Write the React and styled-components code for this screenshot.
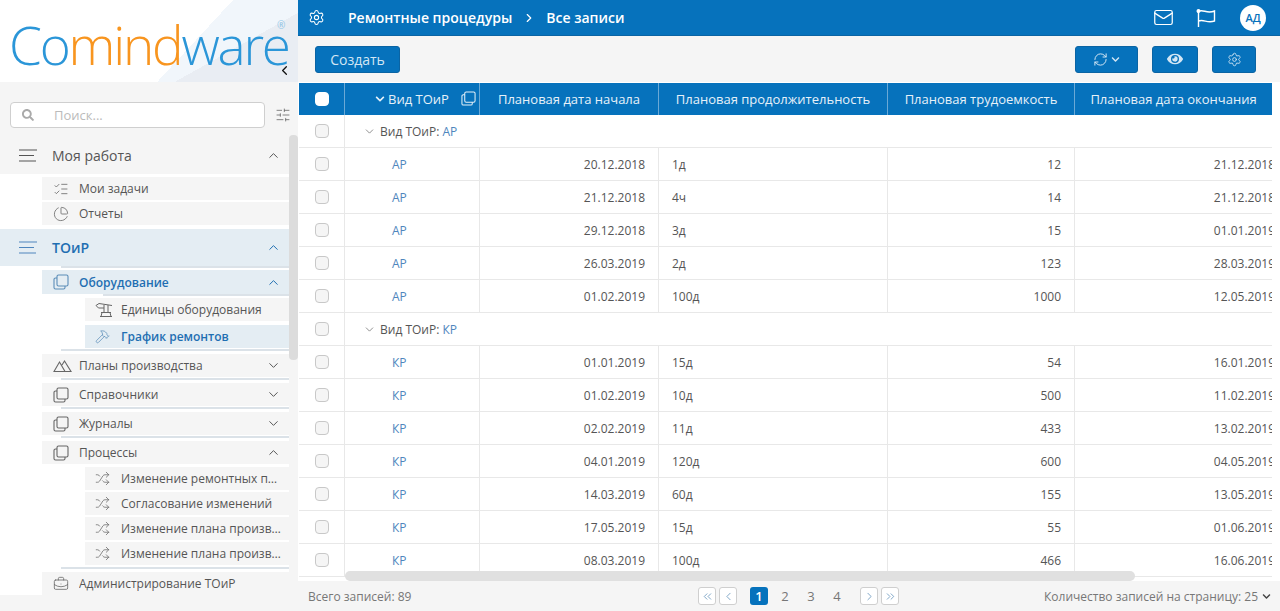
import React from 'react';
import styled, {createGlobalStyle} from 'styled-components';
import {
    BriefcaseBusiness, ChartPie, ChevronDown, ChevronLeft, ChevronRight, ChevronsLeft, ChevronsRight, ChevronUp,
    Hammer, ListChecks, Mail, RefreshCw, Settings, Shuffle, SlidersHorizontal
} from 'lucide-react';
import {FaChevronDown, FaEye, FaSearch} from 'react-icons/fa';

const BLUE = '#0672bc';
const ACTIVE = '#1f6fb2';
const COLUMNS = '46px 135px 179px 229px 187px 214px';
const HEADER_COLUMNS = '46px 135px 179px 229px 187px 197px';

const GlobalStyle = createGlobalStyle`
  html, body {
    margin: 0;
    height: 100%;
    overflow: hidden;
    background: #fff;
    font-family: "Open Sans", "Liberation Sans", sans-serif;
    font-size: 12px;
    color: #555;
  }
`;

const StackIcon = ({color = 'currentColor', size = 16}) => (
    <svg width={size} height={size} viewBox="0 0 16 16" fill="none" stroke={color} strokeWidth="1.1">
        <rect x="4" y="1" width="11" height="11" rx="1.5"/>
        <path d="M4 4H2.5A1.5 1.5 0 0 0 1 5.500V13.500A1.500 1.500 0 0 0 2.500 15H10.500A1.500 1.500 0 0 0 12 13.500V12"/>
    </svg>
);

const MenuLines = ({color}) => (
    <svg width="19" height="13" viewBox="0 0 19 13" fill="none" stroke={color} strokeWidth="1.2">
        <path d="M0 1H18M0 6.500H15M0 12H17"/>
    </svg>
);

const MountainsIcon = () => (
    <svg width="19" height="14" viewBox="0 0 19 14" fill="none" stroke="currentColor" strokeWidth="1.1">
        <path d="M1 12.500L6.500 3L12 12.500ZM9 6L11.500 2L18 12.500H12"/>
    </svg>
);

const EquipmentIcon = () => (
    <svg width="18" height="16" viewBox="0 0 18 16" fill="none" stroke="currentColor" strokeWidth="1">
        <path d="M1 3.500L4 1.500L17 3.500M1 3.500L3.500 6H9M9 3V10.500M13 3V10.500M6 10.500H16M5 14.500H17M7 10.500L6 14.500M15 10.500L16 14.500"/>
    </svg>
);

const FlagIcon = () => (
    <svg width="20" height="20" viewBox="0 0 20 20" fill="none" stroke="currentColor" strokeWidth="1.400">
        <circle cx="2.500" cy="3" r="1.300" fill="currentColor"/>
        <path d="M2.500 4V19M3.500 3C8 1.500 11 6 18.500 3V13C11 15.500 8 11 2.500 13"/>
    </svg>
);

const Page = styled.div`
  display: flex;
  width: 1280px;
  height: 611px;
  overflow: hidden;
`;

const Sidebar = styled.aside`
  position: relative;
  flex: 0 0 298px;
  background: #f5f5f5;
`;

const LogoBox = styled.div`
  position: relative;
  height: 82px;
  padding: 11px 0 0 9px;
  box-sizing: border-box;
  background:
    linear-gradient(150.7deg, transparent 157px, #e9edf3 157px),
    linear-gradient(132.8deg, #fff 171px, #f1f6fb 171px);
`;

const LogoText = styled.div`
  font-family: "Open Sans", sans-serif;
  font-weight: 300;
  font-size: 53px;
  line-height: 68px;
  letter-spacing: -2.2px;
  color: #2b96d8;
  white-space: nowrap;
`;

const LogoAccent = styled.span`
  color: #f8951f;
`;

const Registered = styled.span`
  position: absolute;
  top: 18px;
  left: 277px;
  font-size: 10px;
  color: #8fc4e6;
`;

const CollapseButton = styled.span`
  position: absolute;
  top: 63px;
  left: 277px;
  display: flex;
  color: #111;
`;

const SearchRow = styled.div`
  display: flex;
  align-items: flex-start;
  height: 55px;
  padding: 20px 0 0 10px;
  box-sizing: border-box;
`;

const SearchBox = styled.div`
  display: flex;
  align-items: center;
  width: 255px;
  height: 26px;
  box-sizing: border-box;
  padding-left: 11px;
  background: #fff;
  border: 1px solid #cfcfcf;
  border-radius: 4px;
  color: #bbb;
  font-size: 13px;
`;

const SearchHint = styled.span`
  margin-left: 20px;
`;

const FilterButton = styled.span`
  display: flex;
  margin: 5px 0 0 10px;
  color: #666;
`;

const Nav = styled.nav`
  width: 289px;
  background: #fff;
`;

const SectionRow = styled.div`
  display: flex;
  align-items: center;
  height: 37px;
  padding: 0 8px 0 19px;
  background: ${p => (p.$active ? '#e4edf3' : '#f5f5f5')};
  color: ${p => (p.$active ? ACTIVE : '#555')};
  font-size: 14px;
  font-weight: ${p => (p.$active ? 600 : 500)};
`;

const SectionTitle = styled.span`
  flex: 1;
  margin-left: 14px;
`;

const Group = styled.div`
  display: flex;
  flex-direction: column;
  padding: ${p => p.$padding};
  padding-left: 42px;
`;

const Item = styled.div`
  display: flex;
  align-items: center;
  flex: none;
  height: ${p => p.$height || 23}px;
  margin-bottom: ${p => p.$gap || 0}px;
  margin-left: ${p => (p.$child ? 43 : 0)}px;
  padding: 0 8px 0 ${p => (p.$child ? 10 : 11)}px;
  background: ${p => (p.$active ? '#e4edf3' : '#f5f5f5')};
  color: ${p => (p.$active ? ACTIVE : '#555')};
  font-weight: ${p => (p.$active ? 600 : 400)};
  white-space: nowrap;
`;

const ItemIcon = styled.span`
  display: flex;
  flex: 0 0 ${p => (p.$child ? 26 : 26)}px;
  color: ${p => (p.$active ? '#5b8db8' : '#666')};
`;

const ItemLabel = styled.span`
  flex: 1;
  overflow: hidden;
  text-overflow: ellipsis;
`;

const Rule = styled.div`
  flex: none;
  height: 2px;
  margin: ${p => p.$margin || '1px 0 3px'};
  margin-left: ${p => p.$inset}px;
  background: #dbe2e8;
`;

const ScrollThumb = styled.div`
  position: absolute;
  top: 135px;
  left: 289px;
  width: 9px;
  height: 225px;
  border-radius: 4px;
  background: #dcdcdc;
`;

const Main = styled.main`
  display: flex;
  flex: 1;
  flex-direction: column;
  min-width: 0;
`;

const TopBar = styled.header`
  display: flex;
  align-items: center;
  flex: none;
  height: 36px;
  box-sizing: border-box;
  padding: 0 14px 0 10px;
  background: ${BLUE};
  border-bottom: 1px solid #0a64a4;
  color: #fff;
`;

const Crumb = styled.span`
  font-size: 14px;
  font-weight: 600;
`;

const CrumbIcon = styled.span`
  display: flex;
  margin-right: 23px;
`;

const CrumbSeparator = styled.span`
  display: flex;
  margin: 0 10px;
`;

const TopActions = styled.div`
  display: flex;
  align-items: center;
  gap: 22px;
  margin-left: auto;
`;

const Avatar = styled.span`
  display: flex;
  align-items: center;
  justify-content: center;
  width: 26px;
  height: 26px;
  margin-left: 2px;
  border-radius: 50%;
  background: #fff;
  color: ${BLUE};
  font-size: 11px;
  font-weight: 600;
`;

const Toolbar = styled.div`
  display: flex;
  align-items: center;
  flex: none;
  height: 46px;
  padding: 0 24px 0 17px;
  background: #f5f5f5;
`;

const ToolButton = styled.button`
  display: flex;
  align-items: center;
  justify-content: center;
  gap: 3px;
  width: ${p => p.$width}px;
  height: 27px;
  margin-left: ${p => p.$gap || 0}px;
  padding: 0;
  background: ${BLUE};
  border: 1px solid #0a64a4;
  border-radius: 3px;
  color: #d3e6f4;
  font: 400 14px "Open Sans", sans-serif;
`;

const Spacer = styled.div`
  flex: 1;
`;

const TableFrame = styled.div`
  position: relative;
  flex: 1;
  min-height: 0;
  overflow: hidden;
  margin: 1px 8px 0 1px;
`;

const HeaderRow = styled.div`
  display: grid;
  grid-template-columns: ${HEADER_COLUMNS};
  height: 32px;
  background: ${BLUE};
  color: #e6f1f9;
  font-size: 13px;
`;

const HeaderCell = styled.div`
  display: flex;
  align-items: center;
  justify-content: center;
  gap: 3px;
  position: relative;
  border-right: 1px solid #6aa9d6;
  white-space: nowrap;

  &:last-child {
    border-right: 0;
  }
`;

const HeaderCopy = styled.span`
  position: absolute;
  top: 8px;
  right: 3px;
  display: flex;
`;

const Row = styled.div`
  display: grid;
  grid-template-columns: ${COLUMNS};
  width: 990px;
  height: 33px;
  box-sizing: border-box;
  border-bottom: 1px solid #e8e8e8;
`;

const GroupRow = styled(Row)`
  grid-template-columns: 46px 1fr;
  border-bottom-width: 1px;
`;

const Cell = styled.div`
  display: flex;
  align-items: center;
  justify-content: ${p => p.$align || 'flex-start'};
  padding: 0 13px;
  border-right: 1px solid #e8e8e8;
  white-space: nowrap;
  min-width: 0;
`;

const GroupCell = styled(Cell)`
  gap: 4px;
  padding-left: 18px;
  border-right: 0;
`;

const CheckCell = styled(Cell)`
  justify-content: center;
  padding: 0;
`;

const Check = styled.span`
  width: 14px;
  height: 14px;
  box-sizing: border-box;
  border: 1px solid ${p => (p.$light ? '#fff' : '#c8c8c8')};
  border-radius: 4px;
  background: ${p => (p.$light ? '#fff' : '#f5f5f5')};
`;

const Link = styled.span`
  color: #4f86bd;
`;

const LinkCell = styled(Cell)`
  padding-left: 47px;
`;

const HScroll = styled.div`
  position: absolute;
  left: 46px;
  bottom: 0;
  width: 790px;
  height: 10px;
  border-radius: 5px;
  background: #e0e0e0;
`;

const Footer = styled.footer`
  display: grid;
  grid-template-columns: 390px 202px 1fr;
  align-items: center;
  flex: none;
  height: 30px;
  padding-left: 10px;
  background: #f5f5f5;
  color: #777;
`;

const Pager = styled.div`
  display: flex;
  align-items: center;
`;

const PageArrow = styled.span`
  display: flex;
  align-items: center;
  justify-content: center;
  width: 18px;
  height: 18px;
  margin-right: ${p => p.$gap ?? 3}px;
  background: #fff;
  border: 1px solid #cfcfcf;
  border-radius: 3px;
  box-sizing: border-box;
  color: #5b8db8;
`;

const PageNumber = styled.span`
  display: flex;
  align-items: center;
  justify-content: center;
  width: 18px;
  height: 18px;
  margin-right: ${p => p.$gap ?? 8}px;
  border-radius: 3px;
  background: ${p => (p.$current ? BLUE : 'transparent')};
  color: ${p => (p.$current ? '#fff' : '#777')};
  font-size: 13px;
  font-weight: ${p => (p.$current ? 600 : 400)};
`;

const PageSize = styled.div`
  display: flex;
  align-items: center;
  justify-content: flex-end;
  gap: 4px;
  padding-right: 9px;
  color: #777;
`;

const groups = [
    {
        name: 'АР',
        rows: [
            ['20.12.2018', '1д', '12', '21.12.2018'],
            ['21.12.2018', '4ч', '14', '21.12.2018'],
            ['29.12.2018', '3д', '15', '01.01.2019'],
            ['26.03.2019', '2д', '123', '28.03.2019'],
            ['01.02.2019', '100д', '1000', '12.05.2019'],
        ],
    },
    {
        name: 'КР',
        rows: [
            ['01.01.2019', '15д', '54', '16.01.2019'],
            ['01.02.2019', '10д', '500', '11.02.2019'],
            ['02.02.2019', '11д', '433', '13.02.2019'],
            ['04.01.2019', '120д', '600', '04.05.2019'],
            ['14.03.2019', '60д', '155', '13.05.2019'],
            ['17.05.2019', '15д', '55', '01.06.2019'],
            ['08.03.2019', '100д', '466', '16.06.2019'],
        ],
    },
];

const processes = ['Изменение ремонтных процедур', 'Согласование изменений', 'Изменение плана производства', 'Изменение плана производства'];

const Up = () => <ChevronUp size={15} strokeWidth={1.6}/>;
const Down = () => <ChevronDown size={15} strokeWidth={1.6}/>;

export default function App() {
    return (
        <Page>
            <GlobalStyle/>
            <Sidebar>
                <LogoBox>
                    <LogoText>Co<LogoAccent>mind</LogoAccent>ware</LogoText>
                    <Registered>®</Registered>
                    <CollapseButton><ChevronLeft size={15} strokeWidth={2}/></CollapseButton>
                </LogoBox>
                <SearchRow>
                    <SearchBox>
                        <FaSearch size={12} color="#aaa"/>
                        <SearchHint>Поиск...</SearchHint>
                    </SearchBox>
                    <FilterButton><SlidersHorizontal size={16} strokeWidth={1.2}/></FilterButton>
                </SearchRow>
                <Nav>
                    <SectionRow>
                        <MenuLines color="#555"/>
                        <SectionTitle>Моя работа</SectionTitle>
                        <Up/>
                    </SectionRow>
                    <Group $padding="3px 0 4px">
                        <Item $gap={2}><ItemIcon><ListChecks size={16} strokeWidth={1.2}/></ItemIcon><ItemLabel>Мои задачи</ItemLabel></Item>
                        <Item><ItemIcon><ChartPie size={16} strokeWidth={1.2}/></ItemIcon><ItemLabel>Отчеты</ItemLabel></Item>
                    </Group>
                    <SectionRow $active>
                        <MenuLines color="#4f86bd"/>
                        <SectionTitle>ТОиР</SectionTitle>
                        <Up/>
                    </SectionRow>
                    <Group $padding="0">
                        <Rule $inset={19} $margin="0 0 2px"/>
                        <Item $active $height={24}>
                            <ItemIcon $active><StackIcon/></ItemIcon>
                            <ItemLabel>Оборудование</ItemLabel>
                            <Up/>
                        </Item>
                        <Rule $inset={61} $margin="0 0 2px"/>
                        <Item $child $gap={4}><ItemIcon><EquipmentIcon/></ItemIcon><ItemLabel>Единицы оборудования</ItemLabel></Item>
                        <Item $child $active><ItemIcon $active><Hammer size={15} strokeWidth={1.2}/></ItemIcon><ItemLabel>График ремонтов</ItemLabel></Item>
                        <Rule $inset={19}/>
                        <Item><ItemIcon><MountainsIcon/></ItemIcon><ItemLabel>Планы производства</ItemLabel><Down/></Item>
                        <Rule $inset={19}/>
                        <Item><ItemIcon><StackIcon/></ItemIcon><ItemLabel>Справочники</ItemLabel><Down/></Item>
                        <Rule $inset={19}/>
                        <Item><ItemIcon><StackIcon/></ItemIcon><ItemLabel>Журналы</ItemLabel><Down/></Item>
                        <Rule $inset={19}/>
                        <Item $gap={3}><ItemIcon><StackIcon/></ItemIcon><ItemLabel>Процессы</ItemLabel><Up/></Item>
                        {processes.map((name, index) => (
                            <Item $child $gap={index < 3 ? 2 : 0} key={index}>
                                <ItemIcon><Shuffle size={15} strokeWidth={1.2}/></ItemIcon>
                                <ItemLabel>{name}</ItemLabel>
                            </Item>
                        ))}
                        <Rule $inset={19} $margin="2px 0 3px"/>
                        <Item><ItemIcon><BriefcaseBusiness size={16} strokeWidth={1.2}/></ItemIcon><ItemLabel>Администрирование ТОиР</ItemLabel></Item>
                    </Group>
                </Nav>
                <ScrollThumb/>
            </Sidebar>
            <Main>
                <TopBar>
                    <CrumbIcon><Settings size={17} strokeWidth={1.500}/></CrumbIcon>
                    <Crumb>Ремонтные процедуры</Crumb>
                    <CrumbSeparator><ChevronRight size={14} strokeWidth={2}/></CrumbSeparator>
                    <Crumb>Все записи</Crumb>
                    <TopActions>
                        <Mail size={21} strokeWidth={1.400}/>
                        <FlagIcon/>
                        <Avatar>АД</Avatar>
                    </TopActions>
                </TopBar>
                <Toolbar>
                    <ToolButton $width={85}>Создать</ToolButton>
                    <Spacer/>
                    <ToolButton $width={63}>
                        <RefreshCw size={15} strokeWidth={1.600}/>
                        <FaChevronDown size={9}/>
                    </ToolButton>
                    <ToolButton $width={46} $gap={14}><FaEye size={16}/></ToolButton>
                    <ToolButton $width={44} $gap={14}><Settings size={15} strokeWidth={1.400}/></ToolButton>
                </Toolbar>
                <TableFrame>
                    <HeaderRow>
                        <HeaderCell><Check $light/></HeaderCell>
                        <HeaderCell>
                            <FaChevronDown size={10}/>Вид ТОиР
                            <HeaderCopy><StackIcon size={15}/></HeaderCopy>
                        </HeaderCell>
                        <HeaderCell>Плановая дата начала</HeaderCell>
                        <HeaderCell>Плановая продолжительность</HeaderCell>
                        <HeaderCell>Плановая трудоемкость</HeaderCell>
                        <HeaderCell>Плановая дата окончания</HeaderCell>
                    </HeaderRow>
                    {groups.map(group => (
                        <React.Fragment key={group.name}>
                            <GroupRow>
                                <CheckCell><Check/></CheckCell>
                                <GroupCell>
                                    <ChevronDown size={13} strokeWidth={1.200}/>
                                    <span>Вид ТОиР: <Link>{group.name}</Link></span>
                                </GroupCell>
                            </GroupRow>
                            {group.rows.map((row, index) => (
                                <Row key={index}>
                                    <CheckCell><Check/></CheckCell>
                                    <LinkCell><Link>{group.name}</Link></LinkCell>
                                    <Cell $align="flex-end">{row[0]}</Cell>
                                    <Cell>{row[1]}</Cell>
                                    <Cell $align="flex-end">{row[2]}</Cell>
                                    <Cell $align="flex-end">{row[3]}</Cell>
                                </Row>
                            ))}
                        </React.Fragment>
                    ))}
                    <HScroll/>
                </TableFrame>
                <Footer>
                    <span>Всего записей: 89</span>
                    <Pager>
                        <PageArrow><ChevronsLeft size={13} strokeWidth={1.400}/></PageArrow>
                        <PageArrow $gap={13}><ChevronLeft size={13} strokeWidth={1.400}/></PageArrow>
                        <PageNumber $current>1</PageNumber>
                        <PageNumber>2</PageNumber>
                        <PageNumber>3</PageNumber>
                        <PageNumber $gap={14}>4</PageNumber>
                        <PageArrow><ChevronRight size={13} strokeWidth={1.400}/></PageArrow>
                        <PageArrow $gap={0}><ChevronsRight size={13} strokeWidth={1.400}/></PageArrow>
                    </Pager>
                    <PageSize>Количество записей на страницу: 25 <FaChevronDown size={9} color="#444"/></PageSize>
                </Footer>
            </Main>
        </Page>
    );
}
